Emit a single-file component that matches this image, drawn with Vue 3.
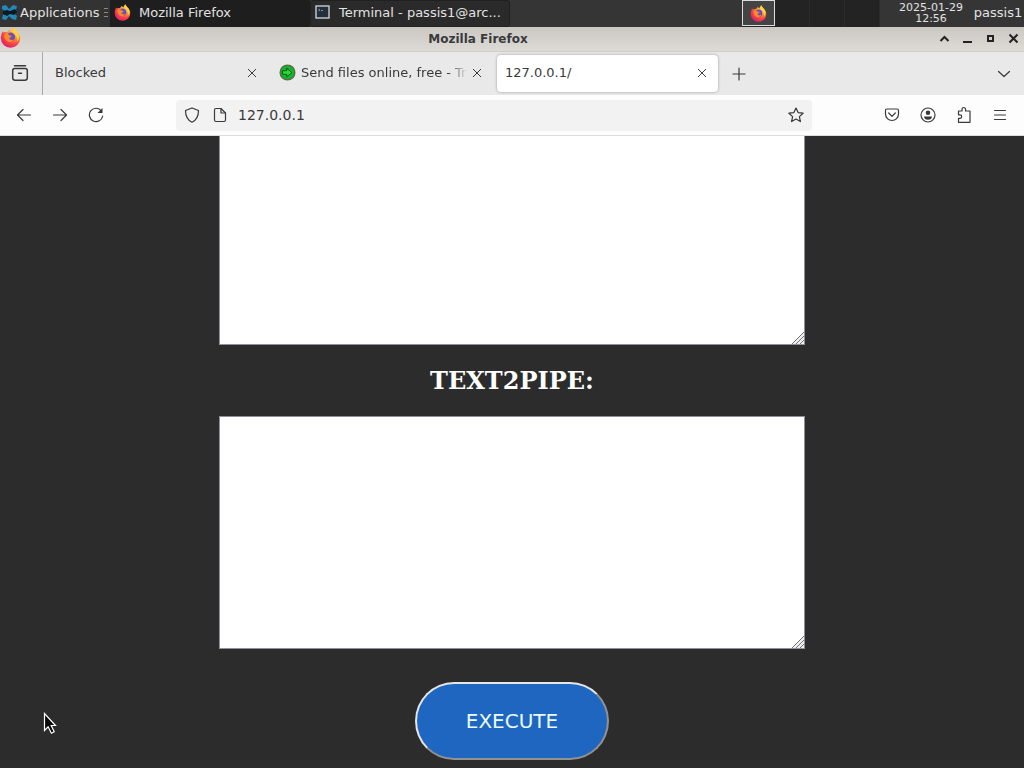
<script setup>
import { ref } from 'vue'

const address = ref('127.0.0.1')
const source = ref('')
const piped = ref('')
const workspaces = [1, 2, 3, 4]
</script>

<template>
  <div class="desktop">
    <svg class="defs" width="0" height="0" aria-hidden="true">
      <defs>
        <radialGradient id="flame" cx="0.72" cy="0.2" r="0.9">
          <stop offset="0" stop-color="#ffe04a" />
          <stop offset="0.4" stop-color="#ff9228" />
          <stop offset="0.7" stop-color="#fa3f48" />
          <stop offset="1" stop-color="#d91c74" />
        </radialGradient>
        <symbol id="firefox" viewBox="0 0 20 20">
          <path fill="url(#flame)" d="M2.6 4.2 3.5 5.3C4.7 4.7 5.7 4.7 6.7 5 7.8 4.2 8.6 3.1 9.2 2.1 9.7 3.2 10.4 3.8 11.2 4.2 11.3 2.7 12.1 1.2 13.3.3 13.9 2.4 16 3.9 17.2 5.6 18.5 7.1 19.2 8.8 19.2 10.8A9.2 9 0 0 1 .8 10.8C.8 8.2 1.4 6.1 2.6 4.2Z" />
          <circle cx="10.2" cy="9.6" r="4.3" fill="#714bc4" />
          <path fill="#ff8b24" d="M4.2 7.2c2.3-1.4 4-.5 4.8.8 1.3 0 2.2.2 2.1.8-.1.9-1.4 1-2.3 1.6.2 1.6 2 2.5 4.4 1.5-1 2-3.2 3-5.3 2.2C5 13.2 3.7 10 4.2 7.2Z" />
          <path fill="#ffd43f" d="M13.3.3c.6 2.1 2.7 3.6 3.9 5.3 1.7 3.2 1 6.4-1 8.3.6-3-.1-5.4-1.9-7.1-1.5-1.2-2-4.2-1-6.5Z" />
        </symbol>
        <symbol id="close" viewBox="0 0 10 10">
          <path d="M1 1 9 9M9 1 1 9" fill="none" stroke="currentColor" />
        </symbol>
      </defs>
    </svg>

    <header class="panel">
      <button class="apps">
        <svg width="17" height="17" viewBox="0 0 17 17" aria-hidden="true">
          <path fill="#2388b5" d="M1 2 5 1 8 5 12 1 16 2 15 6 12 8 16 12 15 16 11 15 8 12 5 16 1 15 2 11 5 8 1 5Z" />
          <path fill="#0b1922" d="m2 7 4-1 3 1 5-2 2 3-3 3-4-1-3 2-4-2Z" />
        </svg>
        <span>Applications</span>
        <span class="grip" aria-hidden="true"><i></i><i></i><i></i></span>
      </button>
      <button class="task firefox-task">
        <svg width="17" height="17" aria-hidden="true"><use href="#firefox" /></svg>
        <span>Mozilla Firefox</span>
      </button>
      <button class="task terminal-task">
        <svg width="16" height="15" viewBox="0 0 16 15" aria-hidden="true">
          <rect x="1" y="1" width="13" height="12" fill="#252f3b" stroke="#c7ccd1" stroke-width="1.4" />
          <path d="m3.500 4 1.500 1-1.500 1M6 5.500h2" fill="none" stroke="#8494a3" />
        </svg>
        <span>Terminal - passis1@arc...</span>
      </button>
      <div class="workspaces">
        <button v-for="n in workspaces" :key="n" :class="['workspace', { current: n === 1 }]" :aria-label="`Workspace ${n}`">
          <svg v-if="n === 1" width="17" height="17" aria-hidden="true"><use href="#firefox" /></svg>
        </button>
      </div>
      <time class="clock" datetime="2025-01-29T12:56"><span>2025-01-29</span><span>12:56</span></time>
      <button class="user">passis1</button>
    </header>

    <div class="titlebar">
      <svg class="title-icon" width="21" height="21" aria-hidden="true"><use href="#firefox" /></svg>
      <span class="title">Mozilla Firefox</span>
      <div class="window-buttons">
        <button aria-label="Shade"><svg width="11" height="11" viewBox="0 0 11 11"><path d="m1.500 8 4-4 4 4" /></svg></button>
        <button aria-label="Minimize"><svg width="11" height="11" viewBox="0 0 11 11"><path d="M1 9h9" /></svg></button>
        <button aria-label="Maximize"><svg width="11" height="11" viewBox="0 0 11 11"><path d="M3 3h5v5H3Z" /></svg></button>
        <button aria-label="Close"><svg width="11" height="11" viewBox="0 0 11 11"><path d="m1.500 1.500 8 8m0-8-8 8" /></svg></button>
      </div>
    </div>

    <nav class="tabs" aria-label="Tabs">
      <button class="recent" aria-label="Recent browsing">
        <svg width="18" height="18" viewBox="0 0 18 18" class="line"><path d="M3.500 1.700h11M1.700 6.500c0-1.300.6-2 2-2h10.600c1.400 0 2 .7 2 2v7.300c0 1.600-.7 2.400-2.300 2.400H4c-1.600 0-2.300-.8-2.300-2.400ZM7.500 9.200h3" stroke-width="1.500" /></svg>
      </button>
      <div class="tab first">
        <a href="#blocked">Blocked</a>
        <button aria-label="Close Blocked"><svg width="10" height="10"><use href="#close" /></svg></button>
      </div>
      <div class="tab second">
        <svg class="favicon" width="17" height="17" viewBox="0 0 17 17" aria-hidden="true">
          <circle cx="8.500" cy="8.500" r="7.300" fill="#14b52b" stroke="#58704a" stroke-width="1.500" />
          <path d="M3.500 6.700h4.200V4.200l5.200 4.500-5.200 4.100v-2.500H3.500Z" fill="#22dc3b" stroke="#075915" />
        </svg>
        <a href="#send" class="fade">Send files online, free - Tr</a>
        <button aria-label="Close Send files online"><svg width="10" height="10"><use href="#close" /></svg></button>
      </div>
      <div class="tab active">
        <a href="#local" aria-current="page">127.0.0.1/</a>
        <button aria-label="Close 127.0.0.1"><svg width="10" height="10"><use href="#close" /></svg></button>
      </div>
      <button class="new-tab" aria-label="New tab"><svg class="line" width="14" height="14" viewBox="0 0 14 14"><path d="M7 1v12M1 7h12" /></svg></button>
      <button class="all-tabs" aria-label="List all tabs"><svg class="line" width="14" height="14" viewBox="0 0 14 14"><path d="m1.500 4.500 5.500 5 5.500-5" /></svg></button>
    </nav>

    <div class="toolbar">
      <div class="history">
        <button aria-label="Back"><svg class="line" width="16" height="16" viewBox="0 0 16 16"><path d="M14.500 8H1.500M7 2.500 1.500 8 7 13.500" /></svg></button>
        <button aria-label="Forward"><svg class="line" width="16" height="16" viewBox="0 0 16 16"><path d="M1.500 8h13M9 2.500 14.500 8 9 13.500" /></svg></button>
        <button aria-label="Reload"><svg class="line" width="16" height="16" viewBox="0 0 16 16"><path d="M13.500 4A6.700 6.700 0 1 0 14.700 9" /><path d="M14.500 1v5h-5Z" fill="currentColor" stroke="none" /></svg></button>
      </div>
      <div class="address">
        <button aria-label="Tracking protection"><svg class="line" width="16" height="16" viewBox="0 0 16 16"><path d="M8 1 14.500 3.500C14.500 9 12.500 13.200 8 15.200 3.500 13.200 1.500 9 1.500 3.500Z" /></svg></button>
        <button aria-label="Site information"><svg class="line" width="16" height="16" viewBox="0 0 16 16"><path d="M4 1.500h5L13.500 6v7c0 1-.5 1.500-1.500 1.500H4c-1 0-1.500-.5-1.500-1.500V3c0-1 .5-1.500 1.500-1.500Z" /><path d="M9 1.500V6h4.500" /></svg></button>
        <input v-model="address" type="text" aria-label="Address" spellcheck="false" />
        <button aria-label="Bookmark"><svg class="line" width="16" height="16" viewBox="0 0 16 16"><path d="m8 1 2.100 4.600 5 .6-3.700 3.400 1 5L8 12.100l-4.400 2.500 1-5L.9 6.200l5-.6Z" /></svg></button>
      </div>
      <div class="actions">
        <button aria-label="Save to Pocket"><svg class="line" width="16" height="16" viewBox="0 0 16 16"><path d="M3 2h10c1.100 0 1.500.7 1.500 1.500V7a6.500 6.500 0 0 1-13 0V3.500C1.500 2.700 1.900 2 3 2Z" /><path d="m4.700 6 3.300 3.300L11.300 6" /></svg></button>
        <button aria-label="Account"><svg class="line" width="16" height="16" viewBox="0 0 16 16"><circle cx="8" cy="8" r="7" /><path d="M8 3.500a2.300 2.300 0 1 1 0 4.600 2.300 2.300 0 0 1 0-4.600ZM4 9.500h8c0 2-1.600 3.300-4 3.300s-4-1.300-4-3.300Z" fill="currentColor" stroke="none" /></svg></button>
        <button aria-label="Extensions"><svg class="line" width="16" height="18" viewBox="0 0 16 18"><path d="M2.500 5H6V3.500c0-2.700 3.500-2.700 3.500 0V5h4.500v11.300H2.500v-4H4c2.300 0 2.300-3.500 0-3.500H2.500Z" /></svg></button>
        <button aria-label="Menu"><svg class="line" width="14" height="14" viewBox="0 0 14 14"><path d="M1.500 2.500h11M1.500 7h11M1.500 11.500h11" /></svg></button>
      </div>
    </div>

    <main class="page">
      <textarea v-model="source" class="source" aria-label="Source"></textarea>
      <h2><label for="piped">TEXT2PIPE:</label></h2>
      <textarea id="piped" v-model="piped"></textarea>
      <button class="execute" type="button">EXECUTE</button>
    </main>

    <svg class="cursor" width="14" height="24" viewBox="0 0 14 24" aria-hidden="true">
      <path d="M1.500 1.500v17l3.600-3.700 3.300 6.400 2.800-1.500-3-6.200h4.300Z" fill="#080808" stroke="#fff" stroke-width="1.200" />
    </svg>
  </div>
</template>

<style>
body {
  background: #2c2c2c;
}
</style>

<style scoped>
* {
  box-sizing: border-box;
}
.desktop {
  position: relative;
  display: flex;
  flex-direction: column;
  height: 100vh;
  overflow: hidden;
  font: 13px "DejaVu Sans", sans-serif;
  color: #3a3a3d;
}
.defs {
  position: absolute;
}
svg {
  flex: none;
  display: block;
}
button {
  display: flex;
  align-items: center;
  justify-content: center;
  padding: 0;
  border: 0;
  background: none;
  color: inherit;
  font: inherit;
}
.line {
  fill: none;
  stroke: currentColor;
  stroke-width: 1.2;
  stroke-linejoin: round;
  stroke-linecap: round;
}
.panel {
  display: flex;
  flex: none;
  height: 27px;
  background: #353535;
  color: #e2e2e2;
  white-space: nowrap;
}
.panel button {
  flex: none;
}
.apps {
  gap: 2px;
  width: 110px;
  padding: 0 0 2px 1px;
  justify-content: flex-start;
  background: #333;
}
.grip {
  display: grid;
  gap: 3px;
  margin-left: 3px;
}
.grip i {
  width: 4px;
  height: 1px;
  background: #888;
}
.task {
  width: 200px;
  padding: 0 4px 2px;
  gap: 8px;
  justify-content: flex-start;
}
.firefox-task {
  background: #1e1e1e;
}
.terminal-task {
  background: #2a2a2a;
  border: 1px solid #202020;
  border-radius: 3px;
}
.workspaces {
  display: flex;
  margin-left: auto;
  background: #232323;
}
.workspace {
  width: 35px;
  border-right: 1px solid #2c2c2c;
}
.workspace.current {
  width: 33px;
  height: 26px;
  border: 1px solid #ddd;
  background: #444;
}
.clock {
  display: flex;
  flex: none;
  flex-direction: column;
  align-items: center;
  width: 92px;
  padding: 2px 0 0 10px;
  font-size: 11px;
  line-height: 11px;
}
.user {
  width: 52px;
  padding-bottom: 2px;
}
.titlebar {
  display: grid;
  grid-template-columns: 1fr auto 1fr;
  flex: none;
  align-items: center;
  height: 25px;
  background: linear-gradient(#cbc8c4, #d6d3cf 60%, #dedbd7);
  border-bottom: 1px solid #d0ceca;
}
.title {
  padding: 0 68px 2px 0;
  font-size: 12px;
  font-weight: bold;
}
.title-icon {
  margin-bottom: 4px;
}
.window-buttons {
  display: flex;
  justify-content: flex-end;
  gap: 12px;
  padding: 0 5px 3px 0;
}
.window-buttons svg {
  fill: none;
  stroke: #222;
  stroke-width: 2;
}
.tabs {
  display: flex;
  flex: none;
  align-items: center;
  height: 43px;
  background: #e9e9e9;
}
.recent {
  width: 43px;
  height: 43px;
  padding: 0 3px 2px 0;
  border-right: 1px solid #aaa;
}
.tab {
  display: flex;
  flex: 0 1 auto;
  align-items: center;
  height: 37px;
  padding-bottom: 2px;
  white-space: nowrap;
}
.tab a {
  flex: 1;
  min-width: 0;
  overflow: hidden;
  color: inherit;
  text-decoration: none;
}
.tab button {
  flex: none;
  width: 16px;
  height: 16px;
}
.first {
  width: 225px;
  padding-right: 8px;
  padding-left: 12px;
}
.second {
  width: 229px;
  padding-right: 12px;
  padding-left: 11px;
  gap: 5px;
}
.second button {
  margin-left: -4px;
}
.fade {
  mask-image: linear-gradient(to right, #000 88%, transparent);
}
.active {
  width: 221px;
  padding-right: 8px;
  padding-left: 8px;
  border-radius: 4px;
  background: #fff;
  box-shadow: 0 0 3px #999;
}
.new-tab {
  width: 42px;
  height: 36px;
}
.all-tabs {
  width: 40px;
  height: 36px;
  margin-left: auto;
}
.toolbar {
  display: flex;
  flex: none;
  align-items: center;
  justify-content: space-between;
  height: 41px;
  background: #fdfdfd;
  border-bottom: 1px solid #ddd;
}
.history {
  display: flex;
  padding-left: 6px;
}
.history button,
.actions button {
  width: 36px;
  height: 32px;
}
.address {
  display: flex;
  flex: 1;
  align-items: center;
  height: 31px;
  margin: 0 62px;
  padding: 0 2px;
  border-radius: 4px;
  background: #f2f2f2;
}
.address button {
  flex: none;
  width: 28px;
  height: 28px;
}
.address input {
  flex: 1;
  min-width: 0;
  height: 28px;
  padding: 0 4px;
  border: 0;
  outline: 0;
  background: none;
  color: inherit;
  font: 14px "DejaVu Sans", sans-serif;
}
.actions {
  display: flex;
  padding-right: 6px;
}
.page {
  display: flex;
  flex: 1;
  flex-direction: column;
  align-items: center;
  min-height: 0;
  background: #2c2c2c;
}
textarea {
  flex: none;
  width: 586px;
  max-width: 100%;
  height: 233px;
  margin: 0;
  padding: 2px;
  border: 1px solid #8f8f9d;
  background: #fff;
  outline: 0;
}
textarea::-webkit-resizer {
  background:
    linear-gradient(135deg, #fff 58%, transparent 58%),
    repeating-linear-gradient(135deg, #777 0 1px, #eee 1px 3px);
}
.source {
  height: 209px;
  border-top: 0;
}
h2 {
  margin: 20px 0;
  color: #fff;
  font: bold 24px/31px "DejaVu Serif", serif;
}
.execute {
  flex: none;
  width: 194px;
  height: 78px;
  margin-top: 33px;
  border: 2px outset #e6e6e6;
  border-radius: 40px;
  background: #1f66c1;
  color: #e9fbff;
  font-size: 20px;
}
.cursor {
  position: absolute;
  top: 712px;
  left: 43px;
}
</style>
